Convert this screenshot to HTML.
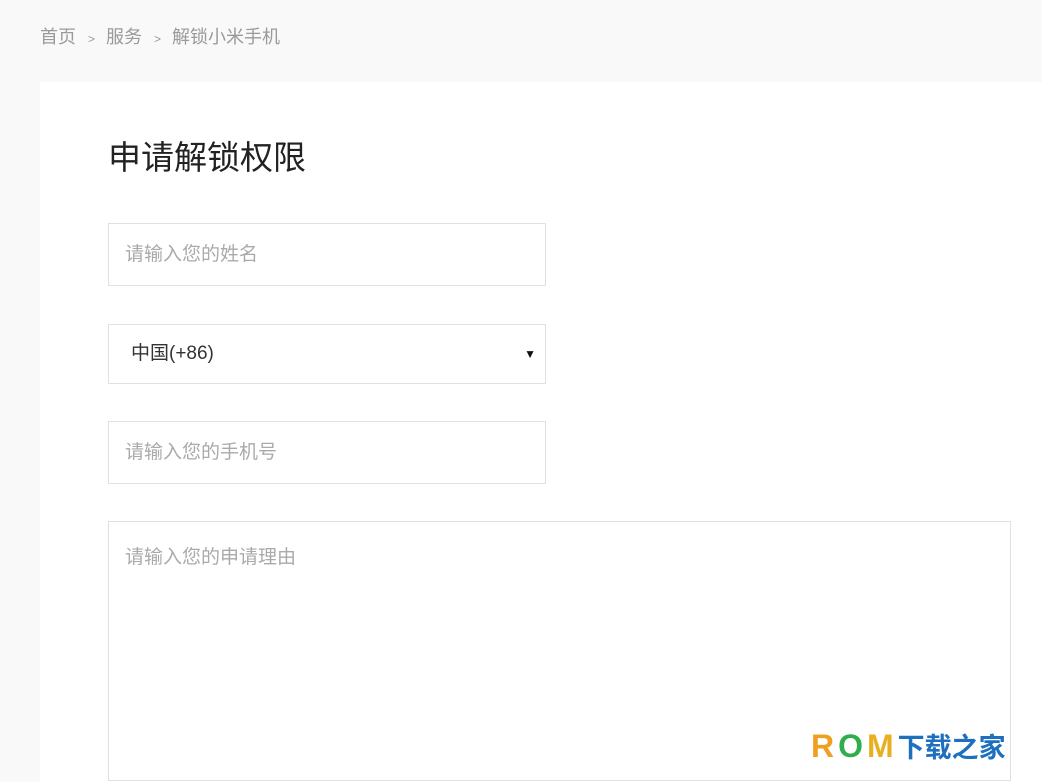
<!DOCTYPE html>
<html><head><meta charset="utf-8"><style>
*{margin:0;padding:0;box-sizing:border-box}
body{width:1042px;height:769px;overflow:hidden;background:#f9f9f9;font-family:"Liberation Sans","Noto Sans CJK SC",sans-serif;position:relative}
.bc{position:absolute;left:40px;top:25px;font-size:18px;color:#9a9a9a;line-height:24px}
.bc span{margin:0 11px 0 12px;font-size:12px}
.card{position:absolute;left:40px;top:82px;width:1002px;height:700px;background:#fff}
h1{position:absolute;left:108px;top:136px;font-size:33px;font-weight:normal;color:#222;line-height:44px}
.in{position:absolute;left:108px;width:438px;border:1px solid #e0e0e0;font-size:19px;color:#aaa;padding-left:16px;background:#fff}
.sel{color:#333;padding-left:22px}
.arrow{position:absolute;right:9px;top:50%;transform:translateY(-50%);font-size:12px;color:#111;line-height:12px}
.ta{width:903px;height:260px;padding-top:20px}
.logo{position:absolute;left:811px;top:728px;font-size:32px;font-weight:bold;line-height:36px;white-space:nowrap}
.logo .r{letter-spacing:4px}
</style></head><body>
<div class="bc">首页<span>&gt;</span>服务<span>&gt;</span>解锁小米手机</div>
<div class="card"></div>
<h1>申请解锁权限</h1>
<div class="in" style="top:223px;height:63px;line-height:61px">请输入您的姓名</div>
<div class="in sel" style="top:324px;height:60px;line-height:58px">中国(+86)<span class="arrow">▼</span></div>
<div class="in" style="top:421px;height:63px;line-height:61px">请输入您的手机号</div>
<div class="in ta" style="top:521px">请输入您的申请理由</div>
<div class="logo"><span class="r"><span style="color:#f0a020">R</span><span style="color:#2fae4a">O</span><span style="color:#e8b020">M</span></span><span style="color:#1e6fc0;font-size:27px">下载之家</span></div>
</body></html>
